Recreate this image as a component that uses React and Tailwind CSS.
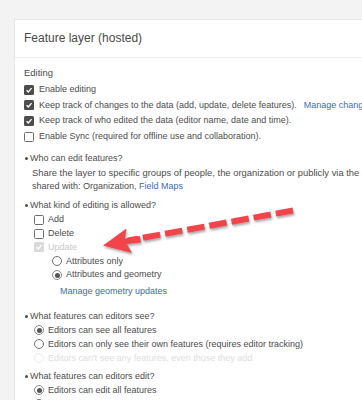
import React from "react";

function Check({ checked, disabled }) {
  if (checked) {
    return (
      <span
        className={
          "w-[10px] h-[10px] shrink-0 rounded-[1.5px] flex items-center justify-center " +
          (disabled ? "bg-[#dadada]" : "bg-[#4c4c4c]")
        }
      >
        <svg width="8" height="8" viewBox="0 0 10 10">
          <path d="M2 5.3 L4.1 7.4 L8.2 2.6" fill="none" stroke="#fff" strokeWidth="1.7" />
        </svg>
      </span>
    );
  }
  return (
    <span className="w-[10px] h-[10px] shrink-0 rounded-[1.5px] border border-[#6e6e6e] bg-white" />
  );
}

function Radio({ checked, disabled }) {
  return (
    <span
      className={
        "w-[10px] h-[10px] shrink-0 rounded-full border bg-white flex items-center justify-center " +
        (disabled ? "border-[#ececec]" : checked ? "border-[#8a8a8a]" : "border-[#6e6e6e]")
      }
    >
      {checked && <span className="w-[5px] h-[5px] rounded-full bg-[#555555]" />}
    </span>
  );
}

function Bullet({ children }) {
  return (
    <div className="h-[14px] flex items-center whitespace-nowrap">
      <span className="w-[3px] h-[3px] rounded-full bg-[#4c4c4c] ml-[1px] mr-[2px] shrink-0" />
      <span>{children}</span>
    </div>
  );
}

function Arrow() {
  return (
    <svg
      className="absolute left-0 top-0 pointer-events-none"
      width="362"
      height="400"
      viewBox="0 0 362 400"
    >
      <defs>
        <filter id="sh" x="-20%" y="-50%" width="140%" height="200%">
          <feDropShadow dx="1" dy="2" stdDeviation="1" floodColor="#555" floodOpacity="0.5" />
        </filter>
      </defs>
      <g filter="url(#sh)">
        <line
          x1="293"
          y1="210.5"
          x2="128"
          y2="240.5"
          stroke="#f2444c"
          strokeWidth="6"
          strokeDasharray="17.5 5"
        />
        <polygon points="103,245.5 126.5,228.5 125,238.5 140,236 141,242.5 127,244 132,253" fill="#f2444c" strokeLinejoin="round" />
      </g>
    </svg>
  );
}

export default function App() {
  const blue = "text-[#3a6db3]";
  return (
    <div className="relative w-[362px] h-[400px] overflow-hidden bg-[#f3f3f3] font-['Liberation_Sans',Arial,sans-serif] text-[9px] text-[#4c4c4c]">
      <div className="ml-[14px] mt-[19px] w-[700px] h-[420px] bg-white border border-[#e6e6e6]">
        <div className="h-[38px] border-b border-[#ededed] flex items-center pl-[9px] pb-[2px] text-[12px] text-[#4a4a4a]">
          Feature layer (hosted)
        </div>
        <div className="pl-[9px] pt-[8px]">
          <div className="h-[14px] flex items-center text-[9.5px]">Editing</div>
          <div className="mt-[2px]">
            <div className="h-[15.6px] flex items-center gap-[5px] whitespace-nowrap">
              <Check checked />
              <span>Enable editing</span>
            </div>
            <div className="h-[15.6px] flex items-center gap-[5px] whitespace-nowrap">
              <Check checked />
              <span>Keep track of changes to the data (add, update, delete features).</span>
              <span className={blue + " ml-[2px]"}>Manage change tracking</span>
            </div>
            <div className="h-[15.6px] flex items-center gap-[5px] whitespace-nowrap">
              <Check checked />
              <span>Keep track of who edited the data (editor name, date and time).</span>
            </div>
            <div className="h-[15.6px] flex items-center gap-[5px] whitespace-nowrap">
              <Check />
              <span>Enable Sync (required for offline use and collaboration).</span>
            </div>
          </div>

          <div className="mt-[7.6px]">
            <Bullet>Who can edit features?</Bullet>
            <div className="pl-[8px] whitespace-nowrap">
              <div className="h-[14px] flex items-center text-[9.4px]">
                Share the layer to specific groups of people, the organization or publicly via the
                Share button.
              </div>
              <div className="h-[14px] flex items-center">
                <span>
                  shared with: Organization, <span className={blue}>Field Maps</span>
                </span>
              </div>
            </div>
          </div>

          <div className="mt-[5px]">
            <Bullet>What kind of editing is allowed?</Bullet>
            <div className="pl-[10px] whitespace-nowrap">
              <div className="h-[13.8px] flex items-center gap-[4px]">
                <Check />
                <span>Add</span>
              </div>
              <div className="h-[13.8px] flex items-center gap-[4px]">
                <Check />
                <span>Delete</span>
              </div>
              <div className="h-[13.8px] flex items-center gap-[4px] text-[#c9c9c9]">
                <Check checked disabled />
                <span>Update</span>
              </div>
              <div className="pl-[18px]">
                <div className="h-[13.8px] flex items-center gap-[4px]">
                  <Radio />
                  <span>Attributes only</span>
                </div>
                <div className="h-[13.8px] flex items-center gap-[4px]">
                  <Radio checked />
                  <span>Attributes and geometry</span>
                </div>
              </div>
              <div className={"h-[14px] mt-[2.5px] pl-[26px] flex items-center " + blue}>
                Manage geometry updates
              </div>
            </div>
          </div>

          <div className="mt-[11px]">
            <Bullet>What features can editors see?</Bullet>
            <div className="pl-[10px] whitespace-nowrap">
              <div className="h-[14px] flex items-center gap-[4px]">
                <Radio checked />
                <span>Editors can see all features</span>
              </div>
              <div className="h-[14px] flex items-center gap-[4px]">
                <Radio />
                <span>Editors can only see their own features (requires editor tracking)</span>
              </div>
              <div className="h-[14px] flex items-center gap-[4px] text-[#dedede]">
                <Radio disabled />
                <span>Editors can't see any features, even those they add</span>
              </div>
            </div>
          </div>

          <div className="mt-[4px]">
            <Bullet>What features can editors edit?</Bullet>
            <div className="pl-[10px] whitespace-nowrap">
              <div className="h-[14px] flex items-center gap-[4px]">
                <Radio checked />
                <span>Editors can edit all features</span>
              </div>
              <div className="h-[14px] flex items-center gap-[4px]">
                <Radio />
                <span>Editors can only edit their own features (requires editor tracking)</span>
              </div>
            </div>
          </div>
        </div>
      </div>
      <Arrow />
    </div>
  );
}
